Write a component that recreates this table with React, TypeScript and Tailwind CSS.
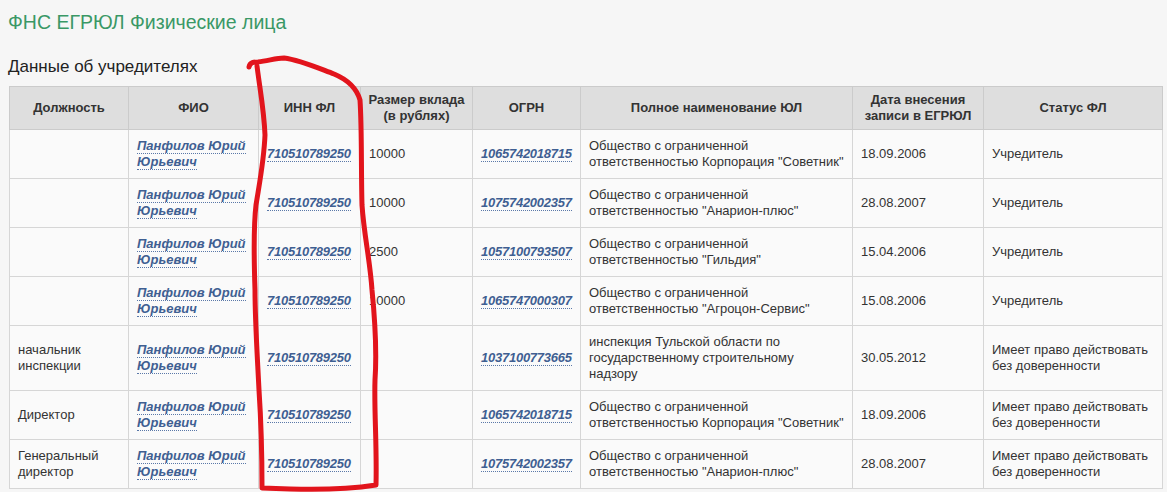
import React from "react";

type Row = {
  pos: string[];
  inn: string;
  sum: string;
  ogrn: string;
  name: string[];
  date: string;
  status: string[];
};

const rows: Row[] = [
  { pos: [], inn: "710510789250", sum: "10000", ogrn: "1065742018715", name: ["Общество с ограниченной", "ответственностью Корпорация \"Советник\""], date: "18.09.2006", status: ["Учредитель"] },
  { pos: [], inn: "710510789250", sum: "10000", ogrn: "1075742002357", name: ["Общество с ограниченной", "ответственностью \"Анарион-плюс\""], date: "28.08.2007", status: ["Учредитель"] },
  { pos: [], inn: "710510789250", sum: "2500", ogrn: "1057100793507", name: ["Общество с ограниченной", "ответственностью \"Гильдия\""], date: "15.04.2006", status: ["Учредитель"] },
  { pos: [], inn: "710510789250", sum: "10000", ogrn: "1065747000307", name: ["Общество с ограниченной", "ответственностью \"Агроцон-Сервис\""], date: "15.08.2006", status: ["Учредитель"] },
  { pos: ["начальник", "инспекции"], inn: "710510789250", sum: "", ogrn: "1037100773665", name: ["инспекция Тульской области по", "государственному строительному", "надзору"], date: "30.05.2012", status: ["Имеет право действовать", "без доверенности"] },
  { pos: ["Директор"], inn: "710510789250", sum: "", ogrn: "1065742018715", name: ["Общество с ограниченной", "ответственностью Корпорация \"Советник\""], date: "18.09.2006", status: ["Имеет право действовать", "без доверенности"] },
  { pos: ["Генеральный", "директор"], inn: "710510789250", sum: "", ogrn: "1075742002357", name: ["Общество с ограниченной", "ответственностью \"Анарион-плюс\""], date: "28.08.2007", status: ["Имеет право действовать", "без доверенности"] },
];

const Lines = ({ lines }: { lines: string[] }) => (
  <>
    {lines.map((l, i) => (
      <div key={i}>{l}</div>
    ))}
  </>
);

const Link = ({ children }: { children: React.ReactNode }) => (
  <span className="font-bold italic text-[#3f5f92] border-b border-dotted border-[#5a78a8] leading-[15px]">
    {children}
  </span>
);

const NumLink = ({ children }: { children: React.ReactNode }) => (
  <span className="font-bold italic text-[#3f5f92] border-b border-dotted border-[#5a78a8] leading-[15px] tracking-[-0.25px]">
    {children}
  </span>
);

const th = "border border-[#cbcbcb] bg-[#dedede] font-bold text-[#333] text-center align-middle px-1 py-0 leading-[16px] whitespace-nowrap";
const td = "border border-[#d6d6d6] bg-[#fafafa] text-[#333] align-middle px-2 py-2 leading-[16px]";

export default function App() {
  return (
    <div
      className="relative w-[1167px] h-[492px] overflow-hidden bg-[#f6f6f6]"
      style={{ fontFamily: '"Liberation Sans", Arial, sans-serif' }}
    >
      <div className="pl-[8px] pt-[10px] text-[19.5px] leading-[24px] text-[#3a9866]">
        ФНС ЕГРЮЛ Физические лица
      </div>
      <div className="pl-[8px] pt-[23px] text-[17px] leading-[20px] text-[#222]">
        Данные об учредителях
      </div>
      <table className="ml-[9px] mt-[9px] w-[1153px] border-collapse table-fixed text-[13px]">
        <colgroup>
          <col className="w-[119px]" />
          <col className="w-[130px]" />
          <col className="w-[102px]" />
          <col className="w-[112px]" />
          <col className="w-[108px]" />
          <col className="w-[272px]" />
          <col className="w-[131px]" />
          <col className="w-[179px]" />
        </colgroup>
        <thead>
          <tr className="h-[43px]">
            <th className={th}>Должность</th>
            <th className={th}>ФИО</th>
            <th className={th}>ИНН ФЛ</th>
            <th className={th}>Размер вклада<br />(в рублях)</th>
            <th className={th}>ОГРН</th>
            <th className={th}>Полное наименование ЮЛ</th>
            <th className={th}>Дата внесения<br />записи в ЕГРЮЛ</th>
            <th className={th}>Статус ФЛ</th>
          </tr>
        </thead>
        <tbody>
          {rows.map((r, i) => (
            <tr key={i}>
              <td className={td}><Lines lines={r.pos} /></td>
              <td className={td}>
                <div><Link>Панфилов Юрий</Link></div>
                <div><Link>Юрьевич</Link></div>
              </td>
              <td className={td}><NumLink>{r.inn}</NumLink></td>
              <td className={td}>{r.sum}</td>
              <td className={td}><NumLink>{r.ogrn}</NumLink></td>
              <td className={td}><Lines lines={r.name} /></td>
              <td className={td}>{r.date}</td>
              <td className={td}><Lines lines={r.status} /></td>
            </tr>
          ))}
        </tbody>
      </table>
      <svg
        className="absolute left-0 top-0 pointer-events-none"
        width="1167"
        height="492"
        viewBox="0 0 1167 492"
      >
        <path
          d="M249 67 C250 62 254 62 258 62 C268 61 276 58 284 58 C300 60 318 68 334 74 C346 79 356 86 360 100 C362 130 361 170 362 205 C364 235 370 260 372 290 C375 320 377 350 375 380 C374 410 377 445 376 485 C350 489 320 490 290 489 L262 488 C262 460 261 420 259 390 C257 350 255 320 255 290 C254 260 253 230 256 205 C260 180 264 160 265 135 C264 110 260 90 257 66"
          fill="none"
          stroke="#e2141c"
          strokeWidth="5"
          strokeLinecap="round"
          strokeLinejoin="round"
        />
      </svg>
    </div>
  );
}
